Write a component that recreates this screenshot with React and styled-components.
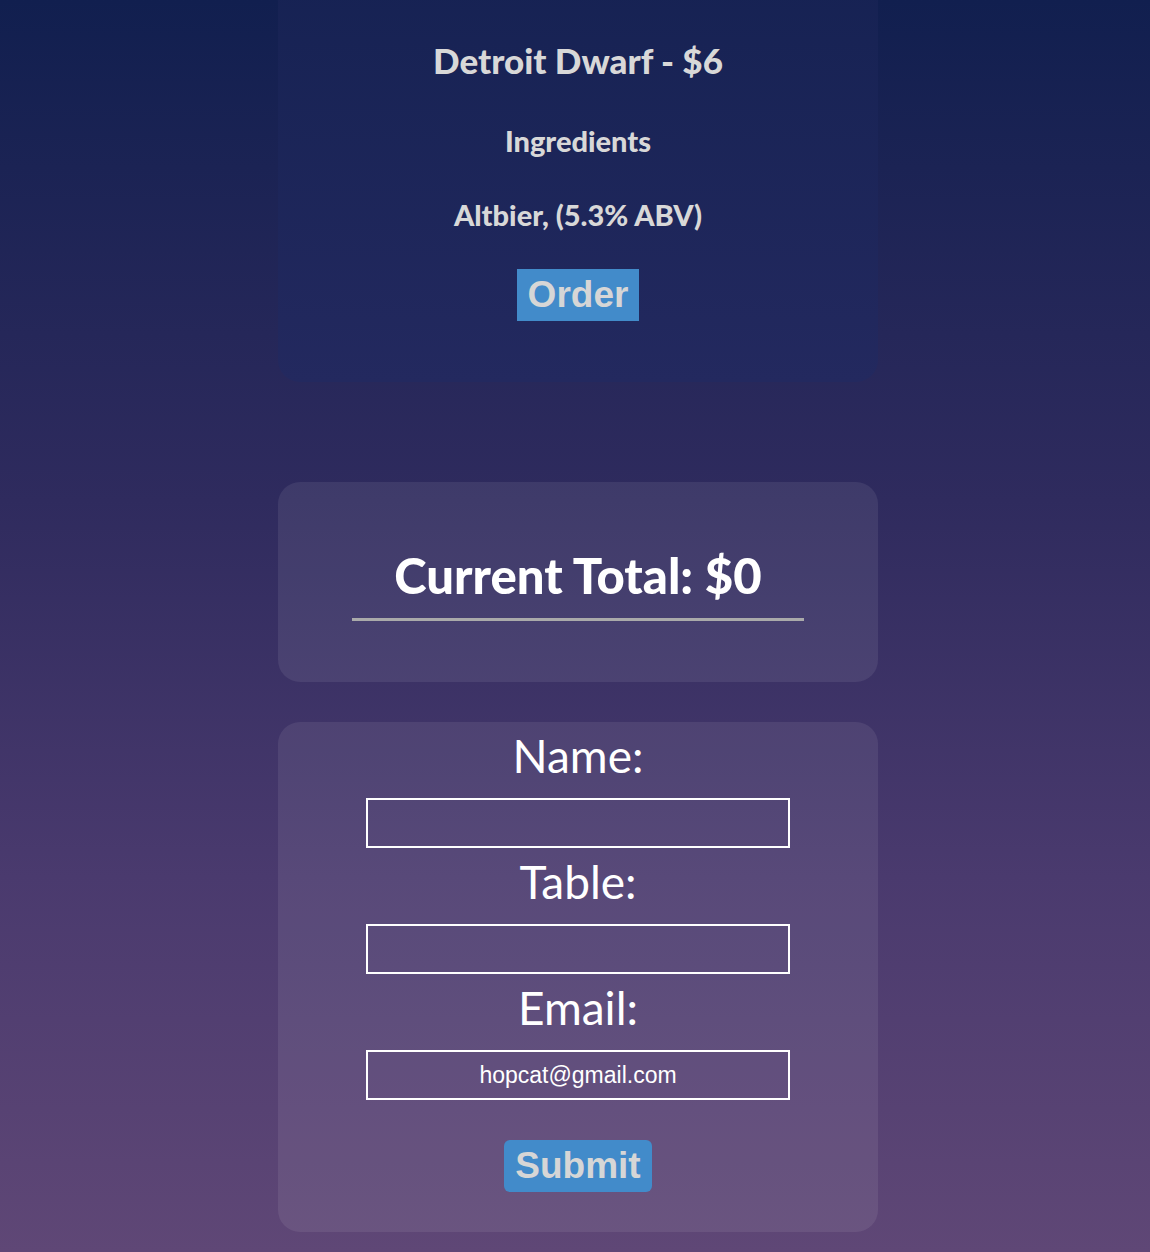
import React from 'react'
import styled, {createGlobalStyle} from 'styled-components'

const GlobalStyle = createGlobalStyle`
  html, body {
    margin: 0;
    padding: 0;
  }
  body {
    font-family: Lato, "Open Sans", sans-serif;
    background: #5f4776;
  }
`

const Page = styled.div`
  min-height: 1252px;
  padding-left: 6px;
  box-sizing: border-box;
  background-image: linear-gradient(to bottom, #111f4f 0%, #2f2b5e 40%, #4a3a6e 70%, #5f4776 100%);
  display: flex;
  flex-direction: column;
  align-items: center;
  overflow: hidden;
`

const Card = styled.div`
  width: 600px;
  box-sizing: border-box;
  border-radius: 22px;
  background: rgba(255, 255, 255, 0.08);
  display: flex;
  flex-direction: column;
  align-items: center;
`

const BeerCard = styled(Card)`
  margin-top: -21px;
  padding: 59px 0 61px;
  background: linear-gradient(to bottom, #162253, #23295f);
`

const BeerTitle = styled.h2`
  margin: 0;
  color: #d8d8d8;
  font-size: 35px;
  font-weight: 900;
  line-height: 44px;
`

const BeerLine = styled.p`
  margin: ${props => props.$top}px 0 0;
  color: #d8d8d8;
  font-size: 29px;
  font-weight: 900;
  line-height: 36px;
`

const BlueButton = styled.button`
  margin-top: ${props => props.$top}px;
  height: 52px;
  padding: 0 11px;
  border: none;
  border-radius: ${props => props.$radius}px;
  background: #428bca;
  color: #d6d6d6;
  font-family: "Liberation Sans", Arial, sans-serif;
  font-size: 37px;
  font-weight: 700;
  line-height: 52px;
  cursor: pointer;
`

const TotalCard = styled(Card)`
  margin-top: 100px;
  height: 200px;
  justify-content: center;
  padding-top: 2px;
`

const TotalText = styled.h1`
  margin: 0;
  color: #ffffff;
  font-size: 49px;
  font-weight: 900;
  line-height: 60px;
`

const Underline = styled.div`
  width: 452px;
  height: 3px;
  margin-top: 13px;
  background: #aaaaaa;
`

const FormCard = styled(Card)`
  margin-top: 40px;
  margin-bottom: 20px;
  padding-bottom: 40px;
`

const Label = styled.label`
  height: 76px;
  box-sizing: border-box;
  padding-bottom: 10px;
  display: flex;
  align-items: center;
  color: #ffffff;
  font-size: 46px;
  font-weight: 400;
`

const Input = styled.input`
  width: 424px;
  height: 50px;
  box-sizing: border-box;
  border: 2px solid #ffffff;
  background: transparent;
  color: #ffffff;
  text-align: center;
  font-family: "Liberation Sans", Arial, sans-serif;
  font-size: 23px;
  outline: none;
`

const fields = [
  {label: 'Name:', value: ''},
  {label: 'Table:', value: ''},
  {label: 'Email:', value: 'hopcat@gmail.com'},
]

const App = () => (
  <>
    <GlobalStyle />
    <Page>
      <BeerCard>
        <BeerTitle>Detroit Dwarf - $6</BeerTitle>
        <BeerLine $top={41}>Ingredients</BeerLine>
        <BeerLine $top={38}>Altbier, (5.3% ABV)</BeerLine>
        <BlueButton $top={36} $radius={0}>Order</BlueButton>
      </BeerCard>

      <TotalCard>
        <TotalText>Current Total: $0</TotalText>
        <Underline />
      </TotalCard>

      <FormCard>
        {fields.map(f => (
          <React.Fragment key={f.label}>
            <Label>{f.label}</Label>
            <Input defaultValue={f.value} />
          </React.Fragment>
        ))}
        <BlueButton $top={40} $radius={6}>Submit</BlueButton>
      </FormCard>
    </Page>
  </>
)

export default App
